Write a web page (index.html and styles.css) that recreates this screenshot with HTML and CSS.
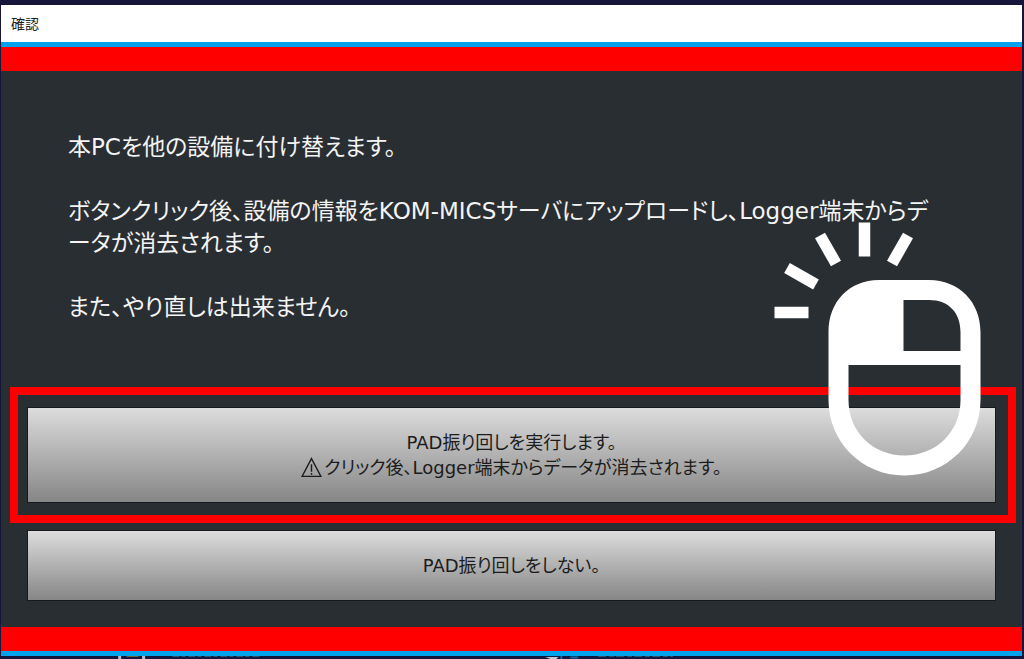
FILE: index.html
```
<!DOCTYPE html>
<html lang="ja">
<head>
    <meta charset="UTF-8">
    <meta name="viewport" content="width=device-width, initial-scale=1.0">
    <title>確認</title>
    <link rel="stylesheet" href="styles.css">
</head>
<body>
    <div class="dialog">
        <header class="titlebar">
            <h1>確認</h1>
        </header>
        <main class="content">
            <div class="message">
                <p>本PCを他の設備に付け替えます。</p>
                <p>ボタンクリック後、設備の情報をKOM-MICSサーバにアップロードし、Logger端末からデ<br>ータが消去されます。</p>
                <p>また、やり直しは出来ません。</p>
            </div>
            <div class="actions">
                <div class="highlight">
                    <button type="button" class="btn btn-run">
                        <span>PAD振り回しを実行します。</span>
                        <span class="warning">
                            <svg class="warning-icon" viewBox="0 0 20 20" aria-hidden="true">
                                <path d="M10 1.5 L19 18.5 H1 Z" fill="none" stroke="#1c1c1c" stroke-width="1.3"/>
                                <path d="M10 7 V14 M10 15.2 V16.8" stroke="#1c1c1c" stroke-width="1.4"/>
                            </svg>
                            クリック後、Logger端末からデータが消去されます。
                        </span>
                    </button>
                </div>
                <button type="button" class="btn btn-cancel">PAD振り回しをしない。</button>
            </div>
        </main>
    </div>
    <!-- tops of the desktop icons behind the dialog -->
    <svg class="desktop-edge" viewBox="0 0 1024 3" preserveAspectRatio="none" aria-hidden="true">
        <path d="M119 0 V3 M143 0 V3" stroke="#b9bcc4" stroke-width="3"/>
        <path d="M126 .5 H138" stroke="#6f6230"/>
        <path d="M172 .5 H259" stroke="#31506f" stroke-dasharray="7 2 4 3"/>
        <path d="M546 1 H559 L557 3 H551 Z" fill="#c4c8d0"/>
        <path d="M562 0 V3 M571 1.5 H579" stroke="#0b6aa8" stroke-width="2"/>
        <path d="M599 .5 H674" stroke="#31506f" stroke-dasharray="8 3 5 2"/>
    </svg>

    <!-- left click hint -->
    <svg class="mouse" viewBox="774 222 208 254" aria-hidden="true">
        <g stroke="#fff" stroke-width="11.5">
            <path d="M774.500 312.500 H808.500"/>
            <path d="M787 268 L816 284.500"/>
            <path d="M820 235.500 L836 263.500"/>
            <path d="M864.500 222.500 V256.500"/>
            <path d="M908 235.500 L892 263.500"/>
        </g>
        <path fill="#fff" fill-rule="evenodd" d="M828.500 332 C828.500 302 849 280 879 280 H929 C959 280 980.500 302 980.500 332 V400 C980.500 442 947 475.500 904.500 475.500 C862 475.500 828.500 442 828.500 400 Z
            M903.500 300 V351 H960.500 V332 C960.500 313 949 300 929 300 Z
            M848.500 365 V400 C848.500 432 873 455.500 904.500 455.500 C936 455.500 960.500 432 960.500 400 V365 Z"/>
    </svg>
</body>
</html>
```
FILE: styles.css
```
* {
    box-sizing: border-box;
}
body {
    margin: 0;
    min-height: 100vh;
    padding: 5px 2px 0 1px;
    display: flex;
    flex-direction: column;
    position: relative;
    background: #15163a;
    font-family: "DejaVu Sans", "Noto Sans CJK JP", sans-serif;
    font-feature-settings: "palt";
}
.dialog {
    flex: 1;
    display: flex;
    flex-direction: column;
    background: #292e33;
    border-bottom: 5px solid #00a2ed;
}
.titlebar {
    height: 42px;
    padding: 0 10px 2px;
    display: flex;
    align-items: center;
    background: #fff;
    border-bottom: 5px solid #00a2ed;
}
.titlebar h1 {
    margin: 0;
    font-size: 14px;
    font-weight: 400;
    color: #222;
}
.content {
    flex: 1;
    display: flex;
    flex-direction: column;
    justify-content: space-between;
    padding: 60px 6px 26px 9px;
    border-top: 24px solid #f00;
    border-bottom: 24px solid #f00;
}
.message {
    padding-left: 58px;
    font-size: 23px;
    line-height: 32px;
    color: #f4f4f4;
    white-space: nowrap;
}
.message p {
    margin: 0 0 32px;
}
.actions {
    display: flex;
    flex-direction: column;
    gap: 7px;
}
.highlight {
    padding: 12px 12px 12px 9px;
    border: 8px solid #f00;
}
.btn {
    display: flex;
    flex-direction: column;
    align-items: center;
    justify-content: center;
    border: 1px solid #17191c;
    border-radius: 0;
    background: linear-gradient(#dcdcdc, #868686);
    font: inherit;
    font-size: 18px;
    line-height: 25px;
    color: #1c1c1c;
    cursor: pointer;
}
.btn-run {
    width: 100%;
    height: 96px;
}
.btn-cancel {
    height: 71px;
    margin: 0 20px 0 17px;
}
.warning {
    display: flex;
    align-items: center;
    gap: 2px;
}
.warning-icon {
    width: 21px;
    height: 21px;
}
.desktop-edge {
    display: block;
    width: 100%;
    height: 3px;
}
.mouse {
    position: absolute;
    top: 222px;
    right: 42px;
    width: 208px;
    height: 254px;
    pointer-events: none;
}
```
